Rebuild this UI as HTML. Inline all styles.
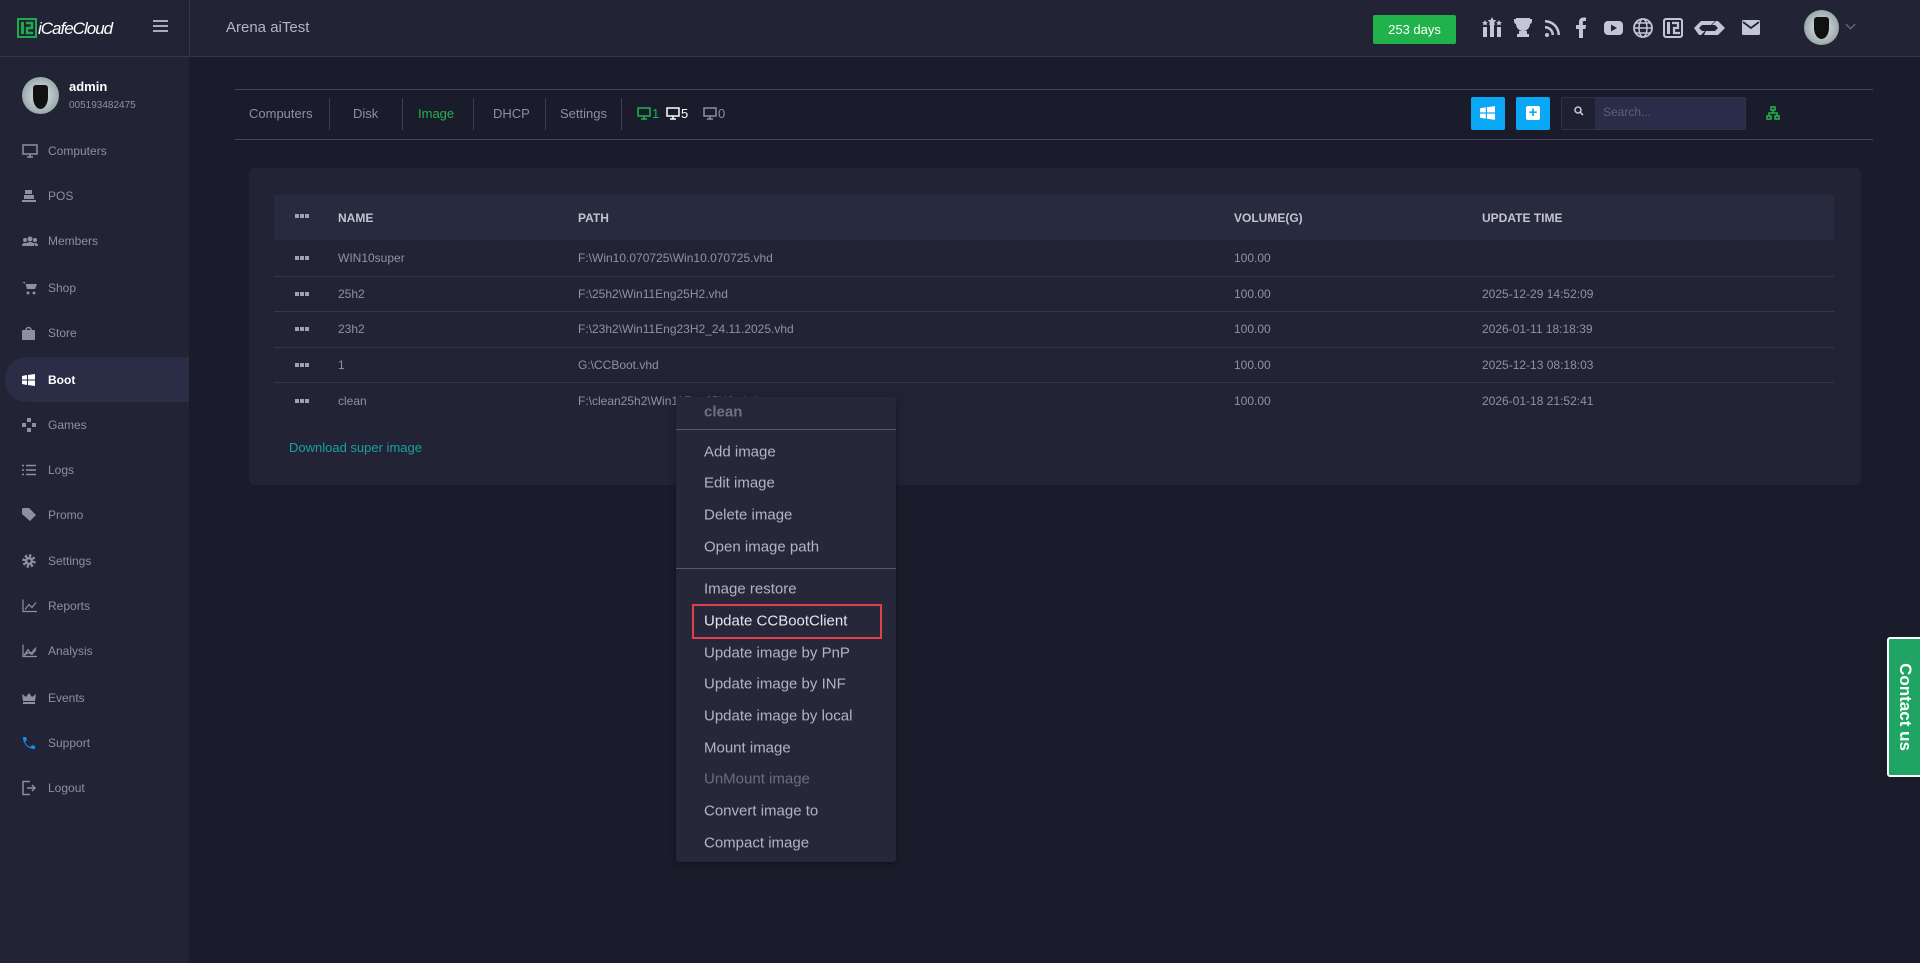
<!DOCTYPE html>
<html><head><meta charset="utf-8"><style>
*{margin:0;padding:0;box-sizing:border-box}
body{width:1920px;height:963px;overflow:hidden;background:#1b1c2b;font-family:"Liberation Sans",sans-serif;position:relative;color:#9a9caf}
.a{position:absolute}
#hdr{left:0;top:0;width:1920px;height:57px;background:#222436;border-bottom:1px solid #34364b}
#side{left:0;top:57px;width:189px;height:906px;background:#222436}
.si{position:absolute;left:0;width:189px;height:45px;font-size:12px;color:#8d8fa2}
.si span.t{position:absolute;left:48px;top:50%;transform:translateY(-50%)}
.si svg{position:absolute;left:22px;top:50%;transform:translateY(-50%)}
.tab{position:absolute;top:106px;font-size:13px;color:#8d8fa2}
.sep{position:absolute;top:98px;width:1px;height:32px;background:#3a3c50}
.th{position:absolute;font-size:12px;font-weight:bold;color:#c3c4d2}
.td{position:absolute;font-size:12px;color:#8f91a4}
.rl{position:absolute;left:274px;width:1560px;height:1px;background:#343650}
.dots{position:absolute;left:295px;width:14px;height:4px;background:linear-gradient(90deg,#a0a2b4 0 4px,transparent 4px 5px,#a0a2b4 5px 9px,transparent 9px 10px,#a0a2b4 10px 14px)}
.mi{position:absolute;left:704px;font-size:15px;color:#b3b4c3;transform:translateY(-50%)}
</style></head><body>
<div id="hdr" class="a"></div>
<div class="a" style="left:189px;top:0;width:1px;height:57px;background:#34364b"></div>
<svg class="a" style="left:17px;top:18px" width="20" height="20" viewBox="0 0 20 20"><rect x="1" y="1" width="18" height="18" fill="none" stroke="#1faa4f" stroke-width="2"/><rect x="4" y="4" width="3" height="12" fill="#1faa4f"/><path d="M9 5h6v5h-5v5h6" fill="none" stroke="#1faa4f" stroke-width="2.5"/></svg>
<div class="a" style="left:38px;top:19px;font-size:17px;color:#fff;font-style:italic;letter-spacing:-1px">iCafeCloud</div>
<div class="a" style="left:153px;top:20px;width:15px;height:2px;background:#a9abbd;box-shadow:0 5px 0 #a9abbd,0 10px 0 #a9abbd"></div>
<div class="a" style="left:226px;top:19px;font-size:15px;color:#b3b5c4">Arena aiTest</div>
<div class="a" style="left:1373px;top:15px;width:83px;height:29px;background:#22b24c;border-radius:2px;color:#fff;font-size:13px;text-align:center;line-height:29px">253 days</div>
<svg class="a" style="left:1480px;top:15px" width="300" height="26" viewBox="0 0 300 24" fill="#c2c6d6">
<g transform="translate(0,0)"><rect x="3" y="11" width="4" height="10"/><rect x="10" y="8" width="4" height="13"/><rect x="17" y="11" width="4" height="10"/><path d="M12 1l1.5 3 3 .3-2.3 2 .7 3-2.9-1.6-2.9 1.6.7-3-2.3-2 3-.3z"/><path d="M19 4l1 2 2 .2-1.5 1.3.5 2-2-1-2 1 .5-2L16 6.2l2-.2z"/><path d="M5 4l1 2 2 .2-1.5 1.3.5 2-2-1-2 1 .5-2L2 6.2l2-.2z"/></g>
<g transform="translate(1,0)"><path d="M35 2h14v6a7 7 0 0 1-14 0zM38 15h8v3h2v3h-12v-3h2z"/><path d="M33 3h3v5h-1a3 3 0 0 1-2-3zM51 3h-3v5h1a3 3 0 0 0 2-3z"/></g>
<g transform="translate(3,0)"><circle cx="64" cy="19" r="2"/><path d="M62 10a9 9 0 0 1 9 9h-2.5a6.5 6.5 0 0 0-6.5-6.5zM62 4a15 15 0 0 1 15 15h-2.5a12.5 12.5 0 0 0-12.5-12.5z"/></g>
<g transform="translate(5,0)"><path d="M94 22v-9h-3v-4h3V6c0-3 2-4.5 4.5-4.5H101v3.5h-2c-1 0-1.2.5-1.2 1.3V9h3.2l-.5 4H98v9z"/></g>
<g transform="translate(8,0)"><rect x="116" y="5" width="19" height="14" rx="4"/><path d="M123 8.5l6 3.5-6 3.5z" fill="#222436"/></g>
<g transform="translate(11,0)"><circle cx="152" cy="12" r="9" fill="none" stroke="#c2c6d6" stroke-width="1.8"/><ellipse cx="152" cy="12" rx="4" ry="9" fill="none" stroke="#c2c6d6" stroke-width="1.5"/><path d="M143 12h18M145 7h14M145 17h14" stroke="#c2c6d6" stroke-width="1.5"/></g>
<g transform="translate(14,0)"><rect x="170" y="3" width="18" height="18" rx="2" fill="none" stroke="#c2c6d6" stroke-width="2"/><rect x="173" y="6" width="3" height="12"/><path d="M178 7h6v5h-4v5h6" fill="none" stroke="#c2c6d6" stroke-width="2.2"/></g>
<g transform="translate(17,0)"><path d="M197 12l7-7h14l-4 4h-9l-3 3 3 3h3l-4 4h-2zM209 15h9l3-3-3-3h-3l4-4h2l7 7-7 7h-14z"/></g>
<g transform="translate(21,0)"><rect x="241" y="4" width="18" height="15" rx="1.5"/><path d="M242 6l8 6 8-6" stroke="#222436" stroke-width="1.8" fill="none"/></g>
</svg>
<div class="a" style="left:1804px;top:10px;width:35px;height:35px;border-radius:50%;background:radial-gradient(circle,#e8e8f0,#9aa 70%,#c8d0e8)"></div>
<div class="a" style="left:1814px;top:17px;width:15px;height:22px;background:#111;border-radius:3px 3px 50% 50%"></div>
<div class="a" style="left:1847px;top:21px;width:7px;height:7px;border-right:1.5px solid #777a8e;border-bottom:1.5px solid #777a8e;transform:rotate(45deg)"></div>

<div id="side" class="a"></div>
<div class="a" style="left:189px;top:57px;width:1px;height:906px;background:#1a1b28"></div>
<div class="a" style="left:22px;top:77px;width:37px;height:37px;border-radius:50%;background:radial-gradient(circle,#e8e8f0,#9aa 70%,#c8d0e8)"></div>
<div class="a" style="left:33px;top:85px;width:15px;height:24px;background:#111;border-radius:3px 3px 50% 50%"></div>
<div class="a" style="left:69px;top:79px;font-size:13px;font-weight:bold;color:#fff">admin</div>
<div class="a" style="left:69px;top:100px;font-size:10px;color:#8d8fa2">005193482475</div>
<div class="a" style="left:5px;top:357px;width:184px;height:45px;background:#2a2d45;border-radius:22px 0 0 22px"></div>

<div class="si" style="top:128px"><svg width="16" height="14" viewBox="0 0 16 14" fill="none" stroke="#8d8fa2" stroke-width="1.5"><rect x="1" y="1" width="14" height="9"/><path d="M5 13h6M8 10v3"/></svg><span class="t">Computers</span></div>
<div class="si" style="top:173px"><svg width="14" height="12" viewBox="0 0 14 12" fill="#8d8fa2"><rect x="3" y="0" width="7" height="4"/><rect x="2" y="5" width="10" height="4"/><rect x="0" y="10" width="14" height="2"/></svg><span class="t">POS</span></div>
<div class="si" style="top:218px"><svg width="16" height="10" viewBox="0 0 16 10" fill="#8d8fa2"><circle cx="8" cy="3" r="2.5"/><circle cx="3" cy="4" r="2"/><circle cx="13" cy="4" r="2"/><path d="M3 10a5 4 0 0 1 10 0zM0 10a3 3 0 0 1 4-3v3zM16 10a3 3 0 0 0-4-3v3z"/></svg><span class="t">Members</span></div>
<div class="si" style="top:265px"><svg width="15" height="14" viewBox="0 0 15 14" fill="#8d8fa2"><path d="M0 1h3l2 7h8l2-5H4"/><circle cx="6" cy="12" r="1.5"/><circle cx="12" cy="12" r="1.5"/></svg><span class="t">Shop</span></div>
<div class="si" style="top:310px"><svg width="13" height="14" viewBox="0 0 13 14" fill="#8d8fa2"><rect x="0" y="4" width="13" height="10" rx="1"/><path d="M4 4a2.5 2.5 0 0 1 5 0" stroke="#8d8fa2" fill="none" stroke-width="1.5"/></svg><span class="t">Store</span></div>
<div class="si" style="top:357px;color:#fff;font-weight:bold"><svg width="13" height="12" viewBox="0 0 13 12" fill="#fff"><path d="M0 2l5-1v4.5H0zM6 1l7-1v5.5H6zM0 6.5h5V11l-5-1zM6 6.5h7V12l-7-1z"/></svg><span class="t">Boot</span></div>
<div class="si" style="top:402px"><svg width="14" height="14" viewBox="0 0 14 14" fill="#8d8fa2"><rect x="5" y="0" width="4" height="4"/><rect x="5" y="10" width="4" height="4"/><rect x="0" y="5" width="4" height="4"/><rect x="10" y="5" width="4" height="4"/></svg><span class="t">Games</span></div>
<div class="si" style="top:447px"><svg width="14" height="11" viewBox="0 0 14 11" stroke="#8d8fa2" stroke-width="1.4"><path d="M0 1h2M4 1h10M0 5.5h2M4 5.5h10M0 10h2M4 10h10"/></svg><span class="t">Logs</span></div>
<div class="si" style="top:492px"><svg width="14" height="14" viewBox="0 0 14 14" fill="#8d8fa2"><path d="M0 1l1-1h6l7 7-6 6-8-7z"/></svg><span class="t">Promo</span></div>
<div class="si" style="top:538px"><svg width="14" height="14" viewBox="0 0 14 14"><circle cx="7" cy="7" r="5" fill="none" stroke="#8d8fa2" stroke-width="3.5" stroke-dasharray="2.2 1.7"/><circle cx="7" cy="7" r="4" fill="#8d8fa2"/><circle cx="7" cy="7" r="1.6" fill="#222436"/></svg><span class="t">Settings</span></div>
<div class="si" style="top:583px"><svg width="15" height="13" viewBox="0 0 15 13" fill="none" stroke="#8d8fa2" stroke-width="1.2"><path d="M1 0v12h14M3 10l4-5 3 3 4-5"/></svg><span class="t">Reports</span></div>
<div class="si" style="top:628px"><svg width="15" height="13" viewBox="0 0 15 13" fill="none" stroke="#8d8fa2" stroke-width="1.2"><path d="M1 0v12h14M2 11l4-6 3 4 5-6M2 11l4-3 4 2 4-5"/></svg><span class="t">Analysis</span></div>
<div class="si" style="top:675px"><svg width="14" height="12" viewBox="0 0 14 12" fill="#8d8fa2"><path d="M0 2l4 3 3-4 3 4 4-3-1 7H1zM1 10h12v2H1z"/></svg><span class="t">Events</span></div>
<div class="si" style="top:720px"><svg width="14" height="14" viewBox="0 0 14 14" fill="#0d8ff0"><path d="M1 1l3 0 1 3-2 1.5a8 8 0 0 0 5.5 5.5L10 9l3 1 0 3c-7 0-12-5-12-12z"/></svg><span class="t">Support</span></div>
<div class="si" style="top:765px"><svg width="14" height="15" viewBox="0 0 14 15" fill="none" stroke="#8d8fa2" stroke-width="1.5"><path d="M8 1H1v13h7M5 7.5h8M10 4.5l3 3-3 3"/></svg><span class="t">Logout</span></div>

<div class="a" style="left:235px;top:89px;width:1638px;height:1px;background:#45475c"></div>
<div class="a" style="left:235px;top:139px;width:1638px;height:1px;background:#45475c"></div>
<div class="tab" style="left:249px">Computers</div>
<div class="sep" style="left:329px"></div>
<div class="tab" style="left:353px">Disk</div>
<div class="sep" style="left:402px"></div>
<div class="tab" style="left:418px;color:#22b24c">Image</div>
<div class="sep" style="left:473px"></div>
<div class="tab" style="left:493px">DHCP</div>
<div class="sep" style="left:545px"></div>
<div class="tab" style="left:560px">Settings</div>
<div class="sep" style="left:621px"></div>
<svg class="a" style="left:637px;top:107px" width="14" height="13" viewBox="0 0 14 13" fill="none" stroke="#22b24c" stroke-width="1.5"><rect x="1" y="1" width="12" height="8"/><path d="M7 9v3M4 12h6"/></svg><div class="tab" style="left:652px;color:#22b24c">1</div>
<svg class="a" style="left:666px;top:107px" width="14" height="13" viewBox="0 0 14 13" fill="none" stroke="#fff" stroke-width="1.5"><rect x="1" y="1" width="12" height="8"/><path d="M7 9v3M4 12h6"/></svg><div class="tab" style="left:681px;color:#fff">5</div>
<svg class="a" style="left:703px;top:107px" width="14" height="13" viewBox="0 0 14 13" fill="none" stroke="#8d8fa2" stroke-width="1.5"><rect x="1" y="1" width="12" height="8"/><path d="M7 9v3M4 12h6"/></svg><div class="tab" style="left:718px">0</div>

<div class="a" style="left:1471px;top:97px;width:34px;height:33px;background:#0aa7f5;border-radius:2px"></div>
<svg class="a" style="left:1480px;top:106px" width="15" height="14" viewBox="0 0 13 12" fill="#fff"><path d="M0 2l5-1v4.5H0zM6 1l7-1v5.5H6zM0 6.5h5V11l-5-1zM6 6.5h7V12l-7-1z"/></svg>
<div class="a" style="left:1516px;top:97px;width:34px;height:33px;background:#0aa7f5;border-radius:2px"></div>
<div class="a" style="left:1526px;top:106px;width:14px;height:14px;background:#fff;border-radius:2px;color:#0aa7f5;font-size:15px;line-height:13px;text-align:center;font-weight:bold">+</div>
<div class="a" style="left:1561px;top:97px;width:185px;height:33px;background:#2a2d4a;border:1px solid #303248;border-radius:2px"></div>
<div class="a" style="left:1562px;top:98px;width:33px;height:31px;background:#1f2133"></div>
<svg class="a" style="left:1574px;top:106px" width="10" height="10" viewBox="0 0 10 10" stroke="#c0c2d0" stroke-width="1.6" fill="none"><circle cx="4" cy="4" r="3"/><path d="M6 6l3 3"/></svg>
<div class="a" style="left:1603px;top:105px;font-size:12px;color:#5f6178">Search...</div>
<svg class="a" style="left:1766px;top:106px" width="14" height="14" viewBox="0 0 14 14" fill="none" stroke="#22b24c" stroke-width="1.6"><rect x="5" y="1" width="4" height="3"/><rect x="1" y="10" width="4" height="3"/><rect x="9" y="10" width="4" height="3"/><path d="M7 4v3M3 10V7h8v3"/></svg>

<div class="a" style="left:249px;top:168px;width:1612px;height:317px;background:#222436;border-radius:6px"></div>
<div class="a" style="left:274px;top:195px;width:1560px;height:45px;background:#282a3e"></div>
<div class="dots" style="top:214px"></div>
<div class="th" style="left:338px;top:211px">NAME</div>
<div class="th" style="left:578px;top:211px">PATH</div>
<div class="th" style="left:1234px;top:211px">VOLUME(G)</div>
<div class="th" style="left:1482px;top:211px">UPDATE TIME</div>
<div class="rl" style="top:276px"></div><div class="rl" style="top:311px"></div><div class="rl" style="top:347px"></div><div class="rl" style="top:382px"></div>

<div class="dots" style="top:256px"></div><div class="td" style="left:338px;top:251px">WIN10super</div><div class="td" style="left:578px;top:251px">F:\Win10.070725\Win10.070725.vhd</div><div class="td" style="left:1234px;top:251px">100.00</div>
<div class="dots" style="top:292px"></div><div class="td" style="left:338px;top:287px">25h2</div><div class="td" style="left:578px;top:287px">F:\25h2\Win11Eng25H2.vhd</div><div class="td" style="left:1234px;top:287px">100.00</div><div class="td" style="left:1482px;top:287px">2025-12-29 14:52:09</div>
<div class="dots" style="top:327px"></div><div class="td" style="left:338px;top:322px">23h2</div><div class="td" style="left:578px;top:322px">F:\23h2\Win11Eng23H2_24.11.2025.vhd</div><div class="td" style="left:1234px;top:322px">100.00</div><div class="td" style="left:1482px;top:322px">2026-01-11 18:18:39</div>
<div class="dots" style="top:363px"></div><div class="td" style="left:338px;top:358px">1</div><div class="td" style="left:578px;top:358px">G:\CCBoot.vhd</div><div class="td" style="left:1234px;top:358px">100.00</div><div class="td" style="left:1482px;top:358px">2025-12-13 08:18:03</div>
<div class="dots" style="top:399px"></div><div class="td" style="left:338px;top:394px">clean</div><div class="td" style="left:578px;top:394px">F:\clean25h2\Win11Eng25H2.vhd</div><div class="td" style="left:1234px;top:394px">100.00</div><div class="td" style="left:1482px;top:394px">2026-01-18 21:52:41</div>
<div class="a" style="left:289px;top:440px;font-size:13px;color:#18a29a">Download super image</div>

<div class="a" style="left:676px;top:397px;width:220px;height:465px;background:#262839;border-radius:3px;box-shadow:0 2px 8px rgba(0,0,0,.4)"></div>
<div class="mi" style="top:412px;font-weight:bold;color:#6f7184">clean</div>
<div class="a" style="left:676px;top:429px;width:220px;height:1px;background:#55576a"></div>
<div class="mi" style="top:452px">Add image</div>
<div class="mi" style="top:483px">Edit image</div>
<div class="mi" style="top:515px">Delete image</div>
<div class="mi" style="top:547px">Open image path</div>
<div class="a" style="left:676px;top:568px;width:220px;height:1px;background:#55576a"></div>
<div class="mi" style="top:589px">Image restore</div>
<div class="a" style="left:692px;top:604px;width:190px;height:35px;border:2px solid #e0404a"></div>
<div class="mi" style="top:621px;color:#e3e4ec">Update CCBootClient</div>
<div class="mi" style="top:653px">Update image by PnP</div>
<div class="mi" style="top:684px">Update image by INF</div>
<div class="mi" style="top:716px">Update image by local</div>
<div class="mi" style="top:748px">Mount image</div>
<div class="mi" style="top:779px;color:#6a6c80">UnMount image</div>
<div class="mi" style="top:811px">Convert image to</div>
<div class="mi" style="top:843px">Compact image</div>

<div class="a" style="left:1887px;top:637px;width:36px;height:140px;background:#1fa463;border:2px solid #fff;border-radius:3px"></div>
<div class="a" style="left:1905px;top:707px;transform:translate(-50%,-50%) rotate(90deg);font-size:17px;font-weight:bold;color:#fff;white-space:nowrap">Contact us</div>
</body></html>
